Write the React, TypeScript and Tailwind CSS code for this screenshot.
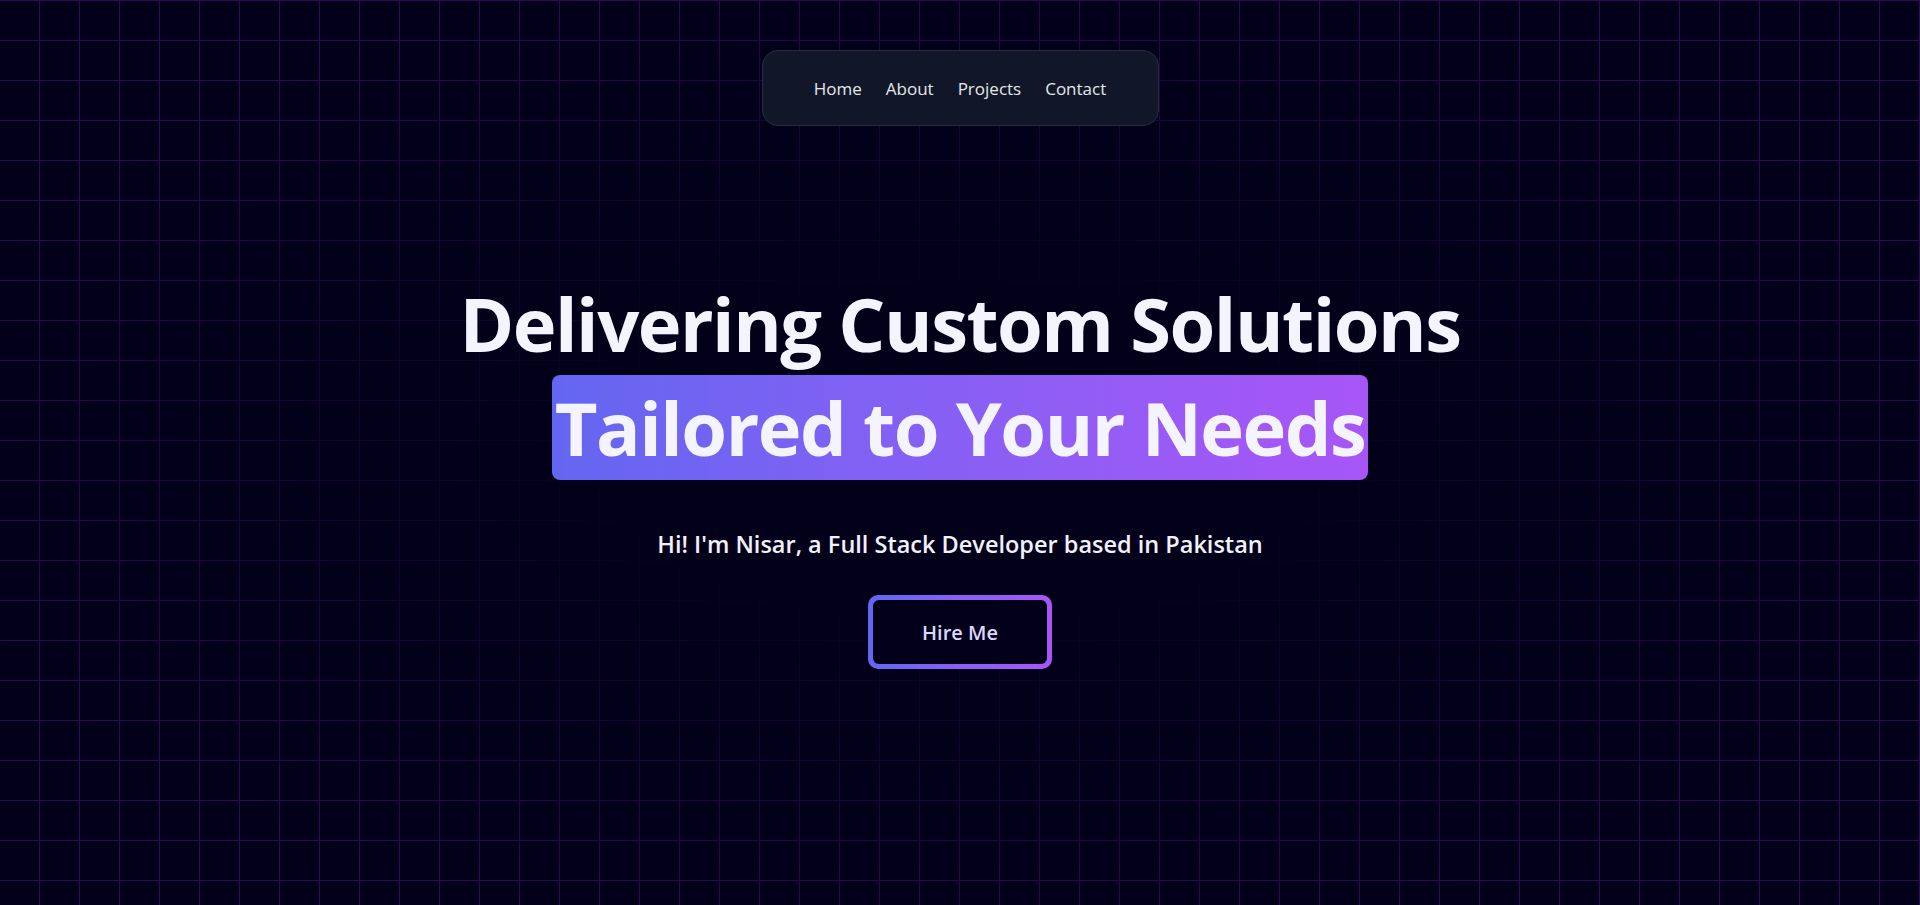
import React from "react";

export default function App() {
  return (
    <div className="relative min-h-screen w-full overflow-hidden bg-[#03001a] font-['Open_Sans',sans-serif]">
      <div className="pointer-events-none absolute inset-0 bg-[linear-gradient(to_left,#2d0b50_1px,transparent_1px),linear-gradient(to_bottom,#2d0b50_1px,transparent_1px)] bg-[size:40px_40px] [mask-image:radial-gradient(ellipse_55%_55%_at_50%_50%,transparent_30%,black_100%)]" />
      <div className="relative flex flex-col items-center">
        <nav className="mt-[50px] flex h-[76px] w-[397px] items-center justify-center gap-6 rounded-2xl border border-[#262d3f] bg-[#111729] pt-[2px] text-[17px] text-[#e5e7eb]">
          <a>Home</a>
          <a>About</a>
          <a>Projects</a>
          <a>Contact</a>
        </nav>
        <h1 className="mt-[147px] flex flex-col items-center text-[74px] font-bold leading-[102px] tracking-[-1.5px] text-[#f4f4ff]">
          <span>Delivering Custom Solutions</span>
          <span className="rounded-lg bg-gradient-to-r from-[#6366f1] to-[#a855f7] px-[3px] leading-[105px]">Tailored to Your Needs</span>
        </h1>
        <p className="mt-[47px] text-[23.5px] font-semibold text-[#f1f1fb]">Hi! I'm Nisar, a Full Stack Developer based in Pakistan</p>
        <button className="mt-[33px] rounded-[10px] bg-gradient-to-r from-[#6366f1] to-[#a855f7] p-[5px]">
          <span className="flex h-[64px] w-[174px] items-center justify-center rounded-[6px] bg-[#03001a] pt-[2px] text-[20px] font-semibold text-[#ddd6fe]">Hire Me</span>
        </button>
      </div>
    </div>
  );
}
